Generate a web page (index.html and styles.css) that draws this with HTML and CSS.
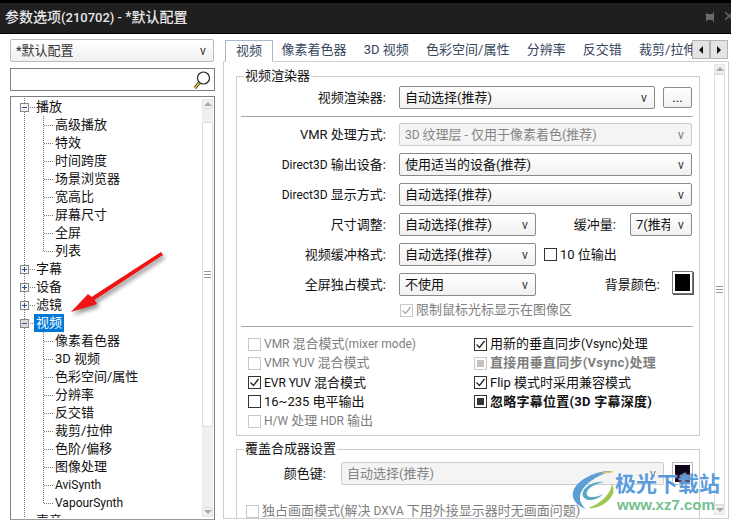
FILE: index.html
```html
<!DOCTYPE html>
<html lang="en">
<head>
    <meta charset="UTF-8">
    <title>参数选项</title>
    <link rel="stylesheet" href="styles.css">
</head>
<body>
    <div class="window">
        <div class="titlebar">
            <span class="title">参数选项<span class="lat">(210702) - </span>*默认配置</span>
            <svg class="pin" width="30" height="14" viewBox="0 0 30 14"><path d="M0 7h4M4 3h1v8H4zM5 4h6v6H5zM11 2h1v10h-1z" fill="#6a6a6a"/><path d="M23 2l8 8M31 2l-8 8" stroke="#6a6a6a" stroke-width="1.3" fill="none"/></svg>
        </div>
        <div class="main">
            <div class="sidebar">
                <div class="combo profile"><span class="combo-text">*默认配置</span><span class="drop">v</span></div>
                <div class="search">
                    <svg width="20" height="22" viewBox="0 0 20 22"><circle cx="11.5" cy="9" r="6" fill="#fff" stroke="#222" stroke-width="1.2"/><path d="M7 14l-4 5" stroke="#222" stroke-width="3"/><path d="M7 14l-4 5" stroke="#f0d020" stroke-width="1.6"/></svg>
                </div>
                <div class="tree">
                    <div class="tree-list">
                        <div class="node"><span class="toggle minus"></span><span class="tick"></span>播放</div>
                        <div class="branch">
                            <div class="leaf">高级播放</div>
                            <div class="leaf">特效</div>
                            <div class="leaf">时间跨度</div>
                            <div class="leaf">场景浏览器</div>
                            <div class="leaf">宽高比</div>
                            <div class="leaf">屏幕尺寸</div>
                            <div class="leaf">全屏</div>
                            <div class="leaf">列表</div>
                        </div>
                        <div class="node"><span class="toggle plus"></span><span class="tick"></span>字幕</div>
                        <div class="node"><span class="toggle plus"></span><span class="tick"></span>设备</div>
                        <div class="node"><span class="toggle plus"></span><span class="tick"></span>滤镜</div>
                        <div class="node"><span class="toggle minus gray"></span><span class="tick"></span><span class="selected">视频</span></div>
                        <div class="branch">
                            <div class="leaf">像素着色器</div>
                            <div class="leaf">3D 视频</div>
                            <div class="leaf">色彩空间/属性</div>
                            <div class="leaf">分辨率</div>
                            <div class="leaf">反交错</div>
                            <div class="leaf">裁剪/拉伸</div>
                            <div class="leaf">色阶/偏移</div>
                            <div class="leaf">图像处理</div>
                            <div class="leaf lat">AviSynth</div>
                            <div class="leaf lat">VapourSynth</div>
                        </div>
                        <div class="node"><span class="toggle none"></span><span class="tick"></span>声音</div>
                    </div>
                    <div class="scrollbar tree-bar">
                        <span class="sb-btn"><i class="up"></i></span>
                        <span class="sb-track t1"></span>
                        <span class="sb-thumb t2"><b></b></span>
                        <span class="sb-track t3"></span>
                        <span class="sb-btn"><i class="down"></i></span>
                    </div>
                </div>
            </div>
            <div class="content">
                <div class="tabstrip">
                    <div class="tabs">
                        <span class="tab active">视频</span>
                        <span class="tab">像素着色器</span>
                        <span class="tab">3D 视频</span>
                        <span class="tab">色彩空间/属性</span>
                        <span class="tab">分辨率</span>
                        <span class="tab">反交错</span>
                        <span class="tab">裁剪/拉伸</span>
                    </div>
                    <div class="tab-arrows">
                        <span><i class="left"></i></span>
                        <span><i class="right"></i></span>
                    </div>
                </div>
                <div class="panel">
                    <div class="page">
                        <div class="group">
                            <div class="legend">视频渲染器</div>
                            <div class="row first">
                                <span class="lbl">视频渲染器:</span>
                                <div class="combo w256"><span class="combo-text">自动选择(推荐)</span><span class="drop">v</span></div>
                                <span class="more">...</span>
                            </div>
                            <div class="sep"></div>
                            <div class="row after-sep">
                                <span class="lbl">VMR 处理方式:</span>
                                <div class="combo w293 disabled"><span class="combo-text"><span class="lat">3D </span>纹理层<span class="lat"> - </span>仅用于像素着色(推荐)</span><span class="drop">v</span></div>
                            </div>
                            <div class="row">
                                <span class="lbl"><span class="lat">Direct3D</span> 输出设备:</span>
                                <div class="combo w293"><span class="combo-text">使用适当的设备(推荐)</span><span class="drop">v</span></div>
                            </div>
                            <div class="row">
                                <span class="lbl"><span class="lat">Direct3D</span> 显示方式:</span>
                                <div class="combo w293"><span class="combo-text">自动选择(推荐)</span><span class="drop">v</span></div>
                            </div>
                            <div class="row">
                                <span class="lbl">尺寸调整:</span>
                                <div class="combo w137"><span class="combo-text">自动选择(推荐)</span><span class="drop">v</span></div>
                                <span class="lbl-side">缓冲量:</span>
                                <div class="combo w62"><span class="combo-text">7(推荐)</span><span class="drop">v</span></div>
                            </div>
                            <div class="row">
                                <span class="lbl">视频缓冲格式:</span>
                                <div class="combo w137"><span class="combo-text">自动选择(推荐)</span><span class="drop">v</span></div>
                                <label class="check ten"><span class="box"></span>10 位输出</label>
                            </div>
                            <div class="row">
                                <span class="lbl">全屏独占模式:</span>
                                <div class="combo w137"><span class="combo-text">不使用</span><span class="drop">v</span></div>
                                <span class="lbl-side bg-lbl">背景颜色:</span>
                                <span class="swatch"></span>
                            </div>
                            <label class="check limit off"><span class="box"><svg width="13" height="13" viewBox="0 0 13 13"><path d="M2.5 6.5l3 3 5-6.500" fill="none" stroke="#aaa" stroke-width="1.3"/></svg></span>限制鼠标光标显示在图像区</label>
                            <div class="sep low"></div>
                            <div class="checks">
                                <label class="check off"><span class="box"></span><span class="lat">VMR&nbsp;</span>混合模式<span class="lat">(mixer mode)</span></label>
                                <label class="check"><span class="box"><svg width="13" height="13" viewBox="0 0 13 13"><path d="M2.5 6.5l3 3 5-6.5" fill="none" stroke="#222" stroke-width="1.3"/></svg></span>用新的垂直同步<span class="lat">(Vsync)</span>处理</label>
                                <label class="check off"><span class="box"></span><span class="lat">VMR YUV&nbsp;</span>混合模式</label>
                                <label class="check off strong"><span class="box"><em class="mixed"></em></span>直接用垂直同步(Vsync)处理</label>
                                <label class="check"><span class="box"><svg width="13" height="13" viewBox="0 0 13 13"><path d="M2.5 6.5l3 3 5-6.5" fill="none" stroke="#222" stroke-width="1.3"/></svg></span><span class="lat">EVR YUV&nbsp;</span>混合模式</label>
                                <label class="check"><span class="box"><svg width="13" height="13" viewBox="0 0 13 13"><path d="M2.5 6.5l3 3 5-6.5" fill="none" stroke="#222" stroke-width="1.3"/></svg></span>Flip 模式时采用兼容模式</label>
                                <label class="check"><span class="box"></span>16~235 电平输出</label>
                                <label class="check strong"><span class="box"><em class="mixed dark"></em></span>忽略字幕位置(3D 字幕深度)</label>
                                <label class="check off"><span class="box"></span><span class="lat">H/W&nbsp;</span>处理<span class="lat">&nbsp;HDR&nbsp;</span>输出</label>
                            </div>
                        </div>
                        <div class="group second">
                            <div class="legend">覆盖合成器设置</div>
                            <div class="row key">
                                <span class="lbl short">颜色键:</span>
                                <div class="combo w323 disabled"><span class="combo-text">自动选择(推荐)</span><span class="drop">v</span></div>
                                <span class="swatch dim"></span>
                            </div>
                            <label class="check off exclusive"><span class="box"></span>独占画面模式(解决<span class="lat">&nbsp;DXVA&nbsp;</span>下用外接显示器时无画面问题)</label>
                        </div>
                    </div>
                    <div class="scrollbar page-bar">
                        <span class="sb-btn"><i class="up"></i></span>
                        <span class="sb-thumb p1"><b></b></span>
                        <span class="sb-btn"><i class="down"></i></span>
                    </div>
                </div>
            </div>
        </div>

        <svg class="arrow" width="110" height="80" viewBox="0 0 110 80"><path d="M97 2L99 5 30.5 50 33 54 7 62 24 44 27.500 47z" fill="#f01414"/></svg>

        <div class="watermark">
            <svg class="wm-logo" width="44" height="42" viewBox="0 0 44 42">
                <path d="M42 2C27 1 9 9 3 20c-4 8 1 16 12 20C8 34 7 27 12 20 18 11 30 5 42 2z" fill="#5c9fd6"/>
                <path d="M42 2c-5 0-10 1-15 3 5-1 9-1 13-1z" fill="#d8c860"/>
                <path d="M41 15c-1 9-11 20-24 24 9 1 19-4 24-12 2-4 2-9 0-12z" fill="#9cc850"/>
                <path d="M33 13c-9-1-19 4-21 10-2 5 3 9 9 8 5-1 9-3 11-6-3 2-7 3-11 3-4 0-6-2-5-5 1-4 8-8 17-10z" fill="#5aa8c8"/>
            </svg>
            <div class="wm-text">
                <span class="wm-name">极光下载站</span>
                <span class="wm-url">www.xz7.com</span>
            </div>
        </div>
    </div>
</body>
</html>
```

FILE: styles.css
```css
* {
    box-sizing: border-box;
}
body {
    margin: 0;
    font-family: Roboto, "Noto Sans CJK SC", sans-serif;
    font-size: 13px;
    line-height: 18px;
    color: #111;
    background-color: #fff;
}
.window {
    position: relative;
    width: 731px;
    height: 520px;
    overflow: hidden;
}
/* latin runs in the shot are set a little smaller than the chinese */
.lat {
    font-size: 12px;
}
.titlebar {
    display: flex;
    justify-content: space-between;
    align-items: center;
    height: 34px;
    padding-left: 5px;
    padding-bottom: 2px;
    background-color: #1f1f1f;
    border-top: 3px solid #000;
    border-bottom: 1px solid #000;
}
.title {
    color: #e8e8e8;
    font-size: 14px;
    font-weight: 500;
}
.title .lat {
    font-size: 13px;
}
.pin {
    margin-right: -1px;
}
.main {
    display: flex;
    height: 486px;
}

/* left column */
.sidebar {
    width: 205px;
    margin-left: 10px;
    padding-top: 5px;
}
.combo {
    display: flex;
    justify-content: space-between;
    align-items: center;
    height: 23px;
    padding: 0 5px;
    border: 1px solid #8a8a8a;
    border-radius: 2px;
    background: linear-gradient(#ffffff, #f1f1f1);
    flex-shrink: 0;
}
.combo-text {
    overflow: hidden;
    white-space: nowrap;
}
.drop {
    width: 10px;
    margin-left: 6px;
    flex-shrink: 0;
    text-align: center;
    font-size: 12px;
    color: #333;
}
.profile {
    border-color: #bbb;
    margin-right: 1px;
    color: #333;
}
.search {
    display: flex;
    justify-content: flex-end;
    height: 23px;
    margin-top: 6px;
    padding-right: 2px;
    border: 1px solid #7f7f7f;
}
.tree {
    display: flex;
    height: 424px;
    margin-top: 5px;
    padding: 1px 1px 1px 0;
    border: 1px solid #7f7f7f;
    border-bottom: 1px solid #9a9a9a;
}
.tree-list {
    flex: 1;
    overflow: hidden;
    background: repeating-linear-gradient(#777 0 1px, transparent 1px 2px) 13px 0 / 1px 100% no-repeat;
}
.node {
    display: flex;
    align-items: center;
    height: 18px;
    padding-left: 9px;
    white-space: nowrap;
}
.toggle {
    width: 9px;
    height: 9px;
    border: 1px solid #868686;
    background-color: #f4f4f4;
    background-repeat: no-repeat;
}
.minus {
    background-image: linear-gradient(#2d4f86, #2d4f86);
    background-size: 5px 1px;
    background-position: 1px 3px;
}
.plus {
    background-image: linear-gradient(#2d4f86, #2d4f86), linear-gradient(#2d4f86, #2d4f86);
    background-size: 5px 1px, 1px 5px;
    background-position: 1px 3px, 3px 1px;
}
.gray {
    background-color: #dcdcdc;
}
.none {
    visibility: hidden;
}
.tick {
    width: 5px;
    margin-left: 1px;
    margin-right: 1px;
    border-top: 1px dotted #777;
}
.selected {
    margin-left: -2px;
    padding: 0 2px;
    background-color: #0078d7;
    color: #fff;
}
.branch {
    padding-left: 32px;
    background: repeating-linear-gradient(#777 0 1px, transparent 1px 2px) 32px 0 / 1px calc(100% - 9px) no-repeat;
}
.leaf {
    height: 18px;
    padding-left: 12px;
    white-space: nowrap;
    background: repeating-linear-gradient(90deg, #777 0 1px, transparent 1px 2px) 1px 9px / 9px 1px no-repeat;
}

/* scrollbars */
.scrollbar {
    display: flex;
    flex-direction: column;
    flex-shrink: 0;
    width: 11px;
    background-color: #f0f0f0;
}
.tree-bar {
    margin: 1px 0 1px 0;
}
.sb-btn {
    display: flex;
    justify-content: center;
    align-items: center;
    height: 10px;
    background-color: #f0f0f0;
    border: 1px solid #e4e4e4;
}
.sb-btn i {
    width: 0;
    height: 0;
    border-left: 4px solid transparent;
    border-right: 4px solid transparent;
}
.up {
    border-bottom: 4px solid #a8a8a8;
}
.down {
    border-top: 4px solid #a8a8a8;
}
.sb-thumb {
    display: flex;
    justify-content: center;
    align-items: center;
    background-color: #fff;
    border: 1px solid #dcdcdc;
}
.sb-thumb b {
    width: 7px;
    height: 7px;
    background: repeating-linear-gradient(#999 0 1px, transparent 1px 3px);
}
.t1 {
    height: 13px;
}
.t2 {
    height: 305px;
}
.t3 {
    height: 80px;
}

/* right column */
.content {
    width: 506px;
    margin-left: 8px;
    padding-top: 6px;
}
.tabstrip {
    display: flex;
    height: 22px;
    padding-left: 2px;
}
.tabs {
    display: flex;
    width: 467px;
    overflow: hidden;
    color: #35465c;
}
.tab {
    flex-shrink: 0;
    height: 22px;
    padding: 0 8.6px;
    line-height: 20px;
    white-space: nowrap;
}
.tab.active {
    position: relative;
    z-index: 1;
    padding: 0 10px;
    border: 1px solid #a9b9cd;
    border-bottom: 1px solid #fff;
    background-color: #fff;
}
.tab-arrows {
    display: flex;
    height: 19px;
}
.tab-arrows span {
    display: flex;
    justify-content: center;
    align-items: center;
    width: 18px;
    background-color: #e4e4e4;
    border: 1px solid #b4b4b4;
}
.tab-arrows i {
    width: 0;
    height: 0;
    border-top: 4px solid transparent;
    border-bottom: 4px solid transparent;
}
.left {
    border-right: 4px solid #111;
}
.right {
    border-left: 4px solid #111;
}
.panel {
    position: relative;
    display: flex;
    height: 458px;
    margin-top: -1px;
    padding: 1px 3px 0 12px;
    border: 1px solid #ccd0d6;
}
.page {
    flex: 1;
    overflow: hidden;
    padding-top: 13px;
}
.page-bar {
    margin-top: 1px;
    margin-bottom: 3px;
}
.p1 {
    flex: 1;
}
.group {
    width: 464px;
    height: 360px;
    border: 1px solid #ccc;
}
.group.second {
    height: 90px;
    margin-top: 13px;
}
.legend {
    width: fit-content;
    height: 18px;
    margin: -10px 0 0 7px;
    padding: 0 1px;
    background-color: #fff;
}
.row {
    display: flex;
    align-items: center;
    height: 23px;
    margin-top: 7px;
    padding-right: 7px;
}
.row.first {
    margin-top: 1px;
}
.row.after-sep {
    margin-top: 6px;
}
.row.key {
    margin-top: 4px;
}
.lbl {
    width: 149px;
    margin-right: 13px;
    text-align: right;
    white-space: nowrap;
}
.lbl.short {
    width: 89px;
    margin-right: 15px;
}
.lbl-side {
    margin-left: auto;
    white-space: nowrap;
}
.w256 {
    width: 256px;
}
.w293 {
    width: 293px;
}
.w137 {
    width: 137px;
}
.w62 {
    width: 62px;
    margin-left: 14px;
}
.w323 {
    width: 323px;
}
.disabled {
    border-color: #ccc;
    background: #f4f4f4;
    color: #848484;
}
.disabled .drop {
    color: #777;
}
.more {
    width: 29px;
    height: 21px;
    margin-left: 8px;
    border: 1px solid #8a8a8a;
    border-radius: 2px;
    text-align: center;
    line-height: 19px;
    background: linear-gradient(#ffffff, #f1f1f1);
}
.sep {
    height: 1px;
    width: 452px;
    margin: 7px 0 0 4px;
    background-color: #a8a8a8;
}
.sep.low {
    margin-top: 7px;
}
.check {
    display: flex;
    align-items: center;
    height: 18px;
    white-space: nowrap;
}
.box {
    display: flex;
    justify-content: center;
    align-items: center;
    width: 13px;
    height: 13px;
    margin-right: 3px;
    flex-shrink: 0;
    border: 1px solid #333;
    background-color: #fff;
}
.box svg {
    flex-shrink: 0;
}
.off {
    color: #7e7e7e;
}
.off .box {
    border-color: #c8c8c8;
}
.strong {
    font-weight: 700;
    letter-spacing: 0.25px;
}
.mixed {
    width: 7px;
    height: 7px;
    background-color: #c4c4c4;
}
.mixed.dark {
    background-color: #333;
}
.ten {
    margin-left: 8px;
}
.limit {
    margin: 5px 0 0 163px;
}
.checks {
    display: grid;
    grid-template-columns: 226px 1fr;
    grid-auto-rows: 19.3px;
    margin: 8px 0 0 11px;
}
.exclusive {
    margin: 17px 0 0 9px;
}
.swatch {
    width: 21px;
    height: 23px;
    margin-left: 12px;
    margin-right: -1px;
    margin-bottom: 4px;
    border: 3px solid #fff;
    outline: 1px solid #777;
    outline-offset: -1px;
    background-color: #000;
    box-shadow: 1px 1px 0 #555;
}
.swatch.dim {
    margin-left: 8px;
    margin-bottom: 0;
    background-color: #100418;
    outline-color: #bbb;
    box-shadow: none;
}

/* things lying over the window */
.arrow {
    position: absolute;
    left: 64px;
    top: 250px;
    filter: drop-shadow(2px 3px 2px rgba(0, 0, 0, 0.45));
}
.watermark {
    position: absolute;
    left: 571px;
    top: 469px;
    display: flex;
}
.wm-text {
    display: flex;
    flex-direction: column;
}
.wm-name {
    font-family: "Noto Sans CJK SC", sans-serif;
    font-size: 21px;
    line-height: 26px;
    font-weight: 700;
    color: #5a9bdc;
    white-space: nowrap;
    text-shadow: 0 0 2px rgba(255, 255, 255, 0.9);
}
.wm-url {
    font-family: "Liberation Sans", sans-serif;
    font-size: 15px;
    line-height: 14px;
    margin: 3px 0 0 2px;
    font-weight: 700;
    color: #72c090;
    white-space: nowrap;
    text-shadow: 0 0 2px rgba(255, 255, 255, 0.9);
}
```
